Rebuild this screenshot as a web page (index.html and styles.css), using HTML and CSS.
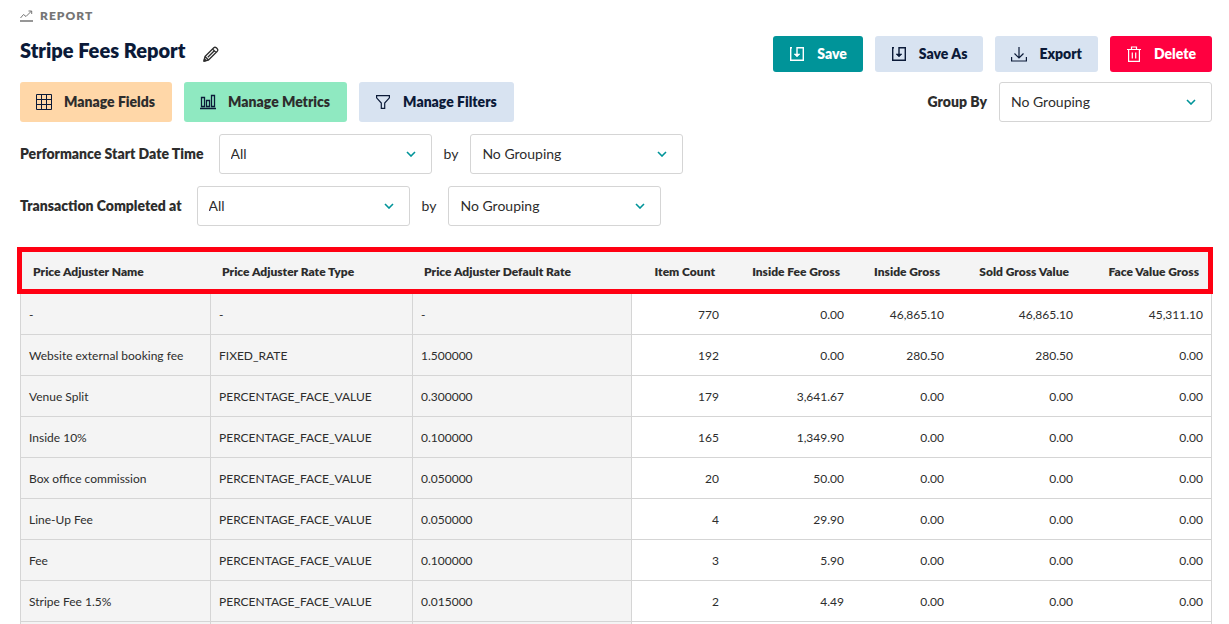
FILE: index.html
```html
<!DOCTYPE html>
<html lang="en">
<head>
    <meta charset="UTF-8">
    <meta name="viewport" content="width=device-width, initial-scale=1.0">
    <title>Stripe Fees Report</title>
    <link rel="stylesheet" href="styles.css">
</head>
<body>
    <main class="report">
        <div class="breadcrumb">
            <svg width="13" height="12" viewBox="0 0 13 12" fill="none" stroke="currentColor"><path d="M.5 8l3-3.500 2.500 2L11.500 1M8.500 1h3.200v3"/><path d="M0 11h13" stroke-width="1.500"/></svg>
            Report
        </div>

        <header class="report-header">
            <div class="title">
                <h1>Stripe Fees Report</h1>
                <button type="button" class="edit-button" aria-label="Edit title">
                    <svg width="16" height="16" viewBox="0 0 16 16" fill="none" stroke="currentColor" stroke-width="1.300" stroke-linejoin="round"><path d="M1 15l1-4.500L10.800 1.700q1.200-1 2.500.1l1 1q1 1.200 0 2.400L5.500 14zM2 10.500L5.500 14M9.500 3l3.500 3.500M4.800 11.200l6-6"/><path d="M1 15l.5-2 1.500 1.500z" fill="currentColor"/></svg>
                </button>
            </div>
            <div class="actions">
                <button type="button" class="button button-save">
                    <svg width="16" height="16" viewBox="0 0 16 16" fill="none" stroke="currentColor" stroke-width="1.400"><path d="M3 1.700H1.700v12.600h12.600V1.700H8V10"/><path d="M5 8l3 3 3-3z" fill="currentColor" stroke-width=".5"/></svg>
                    Save
                </button>
                <button type="button" class="button">
                    <svg width="16" height="16" viewBox="0 0 16 16" fill="none" stroke="currentColor" stroke-width="1.400"><path d="M3 1.700H1.700v12.600h12.600V1.700H8V10"/><path d="M5 8l3 3 3-3z" fill="currentColor" stroke-width=".5"/></svg>
                    Save As
                </button>
                <button type="button" class="button">
                    <svg width="16" height="16" viewBox="0 0 16 16" fill="none" stroke="currentColor" stroke-width="1.200"><path d="M8 1v11M3.500 7.500L8 12l4.500-4.500M.6 11v4h14.800v-4"/></svg>
                    Export
                </button>
                <button type="button" class="button button-delete">
                    <svg width="16" height="16" viewBox="0 0 16 16" fill="none" stroke="currentColor" stroke-width="1.200"><path d="M1 3.500h14M5.500 3.500V1h5v2.500M2.600 3.500v11.900h10.800V3.500M6.300 6.500v6M9.700 6.500v6"/></svg>
                    Delete
                </button>
            </div>
        </header>

        <div class="toolbar">
            <button type="button" class="button button-tall button-fields">
                <svg width="16" height="16" viewBox="0 0 16 16" fill="none" stroke="#0b1a38"><path d="M.5.5h15v15H.5zM5.500.5v15M10.500.5v15M.5 5.500h15M.5 10.500h15"/></svg>
                Manage Fields
            </button>
            <button type="button" class="button button-tall button-metrics">
                <svg width="16" height="16" viewBox="0 0 16 16" fill="none" stroke="#0b1a38" stroke-width="1.300"><path d="M1.500 3.500h3v9h-3zM6.500 6.500h3v6h-3zM11.500 1.500h3v11h-3zM0 14.500h16"/></svg>
                Manage Metrics
            </button>
            <button type="button" class="button button-tall">
                <svg width="16" height="16" viewBox="0 0 16 16" fill="none" stroke="currentColor" stroke-width="1.200"><path d="M1.600 1.600h12.800v2.200L9.700 9v5.400H6.300V9L1.600 3.800z"/></svg>
                Manage Filters
            </button>
            <div class="group-by">
                <label for="group-by">Group By</label>
                <select id="group-by"><option>No Grouping</option></select>
            </div>
        </div>

        <div class="filter">
            <label for="start-date" class="filter-name">Performance Start Date Time</label>
            <select id="start-date"><option>All</option></select>
            <label for="start-date-group" class="by">by</label>
            <select id="start-date-group"><option>No Grouping</option></select>
        </div>
        <div class="filter">
            <label for="completed-at" class="filter-name">Transaction Completed at</label>
            <select id="completed-at"><option>All</option></select>
            <label for="completed-at-group" class="by">by</label>
            <select id="completed-at-group"><option>No Grouping</option></select>
        </div>

        <div class="table-wrapper">
            <table>
                <colgroup>
                    <col class="col-name">
                    <col class="col-type">
                    <col class="col-rate">
                    <col class="col-count">
                    <col class="col-fee">
                    <col class="col-inside">
                    <col class="col-sold">
                    <col class="col-face">
                </colgroup>
                <thead>
                    <tr>
                        <th>Price Adjuster Name</th>
                        <th>Price Adjuster Rate Type</th>
                        <th>Price Adjuster Default Rate</th>
                        <th class="num">Item Count</th>
                        <th class="num">Inside Fee Gross</th>
                        <th class="num">Inside Gross</th>
                        <th class="num">Sold Gross Value</th>
                        <th class="num">Face Value Gross</th>
                    </tr>
                </thead>
                <tbody>
                    <tr><td class="dim">-</td><td class="dim">-</td><td class="dim">-</td><td class="num">770</td><td class="num">0.00</td><td class="num">46,865.10</td><td class="num">46,865.10</td><td class="num">45,311.10</td></tr>
                    <tr><td class="dim">Website external booking fee</td><td class="dim">FIXED_RATE</td><td class="dim">1.500000</td><td class="num">192</td><td class="num">0.00</td><td class="num">280.50</td><td class="num">280.50</td><td class="num">0.00</td></tr>
                    <tr><td class="dim">Venue Split</td><td class="dim">PERCENTAGE_FACE_VALUE</td><td class="dim">0.300000</td><td class="num">179</td><td class="num">3,641.67</td><td class="num">0.00</td><td class="num">0.00</td><td class="num">0.00</td></tr>
                    <tr><td class="dim">Inside 10%</td><td class="dim">PERCENTAGE_FACE_VALUE</td><td class="dim">0.100000</td><td class="num">165</td><td class="num">1,349.90</td><td class="num">0.00</td><td class="num">0.00</td><td class="num">0.00</td></tr>
                    <tr><td class="dim">Box office commission</td><td class="dim">PERCENTAGE_FACE_VALUE</td><td class="dim">0.050000</td><td class="num">20</td><td class="num">50.00</td><td class="num">0.00</td><td class="num">0.00</td><td class="num">0.00</td></tr>
                    <tr><td class="dim">Line-Up Fee</td><td class="dim">PERCENTAGE_FACE_VALUE</td><td class="dim">0.050000</td><td class="num">4</td><td class="num">29.90</td><td class="num">0.00</td><td class="num">0.00</td><td class="num">0.00</td></tr>
                    <tr><td class="dim">Fee</td><td class="dim">PERCENTAGE_FACE_VALUE</td><td class="dim">0.100000</td><td class="num">3</td><td class="num">5.90</td><td class="num">0.00</td><td class="num">0.00</td><td class="num">0.00</td></tr>
                    <tr><td class="dim">Stripe Fee 1.5%</td><td class="dim">PERCENTAGE_FACE_VALUE</td><td class="dim">0.015000</td><td class="num">2</td><td class="num">4.49</td><td class="num">0.00</td><td class="num">0.00</td><td class="num">0.00</td></tr>
                    <tr><td class="dim"></td><td class="dim"></td><td class="dim"></td><td class="num"></td><td class="num"></td><td class="num"></td><td class="num"></td><td class="num"></td></tr>
                </tbody>
            </table>
            <div class="highlight"></div>
        </div>
    </main>
</body>
</html>
```
FILE: styles.css
```css
* {
    box-sizing: border-box;
}
body {
    margin: 0;
    background-color: #fff;
    color: #2d2d2d;
    font-family: Lato, sans-serif;
    font-size: 14px;
    line-height: 20px;
}
.report {
    padding: 6px 17px 0 20px;
}
.breadcrumb {
    display: flex;
    align-items: center;
    gap: 7px;
    color: #757575;
    font-size: 12px;
    font-weight: 800;
    letter-spacing: 1px;
    text-transform: uppercase;
}
.report-header {
    display: flex;
    justify-content: space-between;
    align-items: flex-end;
    margin-top: 10px;
}
.title {
    display: flex;
    align-items: center;
    gap: 18px;
    height: 36px;
}
.title h1 {
    margin: 0;
    padding-bottom: 8px;
    color: #0b1a38;
    font-size: 20px;
    font-weight: 800;
    line-height: 24px;
}
.edit-button {
    display: flex;
    padding: 0;
    border: none;
    background: none;
    color: #2d2d2d;
    cursor: pointer;
}
.actions {
    display: flex;
    gap: 12px;
}
.button {
    display: flex;
    align-items: center;
    gap: 12px;
    height: 36px;
    padding: 0 16px 1px;
    border: none;
    border-radius: 3px;
    background-color: #d8e3f1;
    color: #0b1a38;
    font-family: inherit;
    font-size: 14px;
    font-weight: 800;
    cursor: pointer;
}
.button-save {
    background-color: #009499;
    color: #fff;
}
.button-delete {
    background-color: #ff0040;
    color: #fff;
}
.button-tall {
    height: 40px;
    padding-right: 17px;
}
.button-fields {
    background-color: #ffd7a8;
    color: #2d2d2d;
}
.button-metrics {
    background-color: #8fe9c1;
    color: #2d2d2d;
}
.toolbar {
    display: flex;
    gap: 12px;
    margin-top: 10px;
}
.group-by {
    display: flex;
    align-items: center;
    gap: 12px;
    margin-left: auto;
}
.filter {
    display: flex;
    align-items: center;
    gap: 12px;
    margin-top: 12px;
}
label {
    font-weight: 800;
}
.filter-name {
    padding-right: 3px;
}
.by {
    font-weight: 400;
}
select {
    appearance: none;
    width: 213px;
    height: 40px;
    padding: 0 32px 2px 11px;
    border: 1px solid #d5d5d5;
    border-radius: 3px;
    background: #fff url("data:image/svg+xml,%3Csvg xmlns='http://www.w3.org/2000/svg' width='10' height='6' fill='none' stroke='%23009499' stroke-width='1.600'%3E%3Cpath d='M1 1l4 4 4-4'/%3E%3C/svg%3E") no-repeat right 15px center;
    color: #2d2d2d;
    font-family: inherit;
    font-size: 14px;
}

/* Table */
.table-wrapper {
    position: relative;
    margin-top: 24px;
}
table {
    width: 100%;
    table-layout: fixed;
    border-collapse: separate;
    border-spacing: 0;
    font-size: 12px;
    line-height: 16px;
}
.col-name { width: 190px; }
.col-type { width: 202px; }
.col-rate { width: 219px; }
.col-count { width: 96px; }
.col-fee { width: 125px; }
.col-inside { width: 100px; }
.col-sold { width: 129px; }
.col-face { width: 131px; }
th {
    height: 44px;
    padding: 0 12px;
    background-color: #f4f4f4;
    font-weight: 800;
    text-align: left;
    white-space: nowrap;
}
th:first-child {
    border-left: 1px solid #d5d5d5;
}
th:last-child {
    border-right: 1px solid #d5d5d5;
}
td {
    height: 41px;
    padding: 2px 8px 0;
    border-bottom: 1px solid #d5d5d5;
    white-space: nowrap;
}
.dim {
    border-left: 1px solid #d5d5d5;
    background-color: #f4f4f4;
}
.num {
    text-align: right;
}
.dim + .num {
    border-left: 1px solid #d5d5d5;
}
td:last-child {
    border-right: 1px solid #d5d5d5;
}
/* Red frame over the header row */
.highlight {
    position: absolute;
    top: -3px;
    left: -3px;
    right: -1px;
    height: 47px;
    border: 5px solid #ff0012;
    pointer-events: none;
}
```
